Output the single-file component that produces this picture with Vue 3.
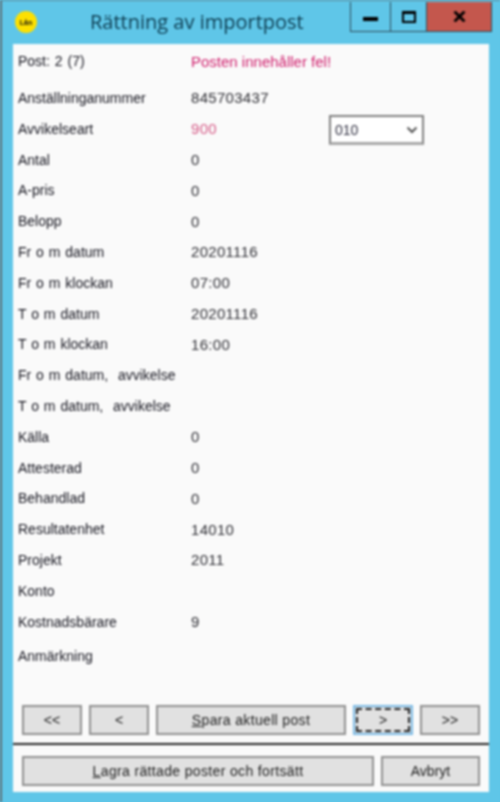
<script setup>
const rows = [
  { label: 'Anställninganummer', value: '845703437' },
  { label: 'Avvikelseart', value: '900', error: true, select: '010' },
  { label: 'Antal', value: '0' },
  { label: 'A-pris', value: '0' },
  { label: 'Belopp', value: '0' },
  { label: 'Fr o m datum', value: '20201116' },
  { label: 'Fr o m klockan', value: '07:00' },
  { label: 'T o m datum', value: '20201116' },
  { label: 'T o m klockan', value: '16:00' },
  { label: 'Fr o m datum,  avvikelse', value: '' },
  { label: 'T o m datum,  avvikelse', value: '' },
  { label: 'Källa', value: '0' },
  { label: 'Attesterad', value: '0' },
  { label: 'Behandlad', value: '0' },
  { label: 'Resultatenhet', value: '14010' },
  { label: 'Projekt', value: '2011' },
  { label: 'Konto', value: '' },
  { label: 'Kostnadsbärare', value: '9' },
  { label: 'Anmärkning', value: '', note: true },
]
</script>

<template>
  <div class="window">
    <header class="titlebar">
      <div class="logo"><span>Lån</span></div>
      <h1 class="title">Rättning av importpost</h1>
      <div class="controls">
        <div class="ctl ctl-min"><i></i></div>
        <div class="ctl ctl-max"><i></i></div>
        <div class="ctl ctl-close">
          <svg width="13" height="11" viewBox="0 0 13 11">
            <path d="M1.5 0.5 L11.5 10.5 M11.5 0.5 L1.5 10.5" stroke="#000" stroke-width="2.8" fill="none" />
          </svg>
        </div>
      </div>
    </header>

    <main class="body">
      <div class="row row-head">
        <span class="label">Post: 2 (7)</span>
        <span class="value err">Posten innehåller fel!</span>
      </div>
      <div v-for="r in rows" :key="r.label" class="row" :class="{ 'row-note': r.note }">
        <span class="label">{{ r.label }}</span>
        <span class="value" :class="{ err2: r.error }">{{ r.value }}</span>
        <div v-if="r.select" class="select">
          <span>{{ r.select }}</span>
          <svg width="12" height="8" viewBox="0 0 12 8">
            <path d="M1.5 1.5 L6 6 L10.5 1.5" stroke="#555" stroke-width="2" fill="none" />
          </svg>
        </div>
      </div>

      <div class="spacer"></div>

      <div class="nav">
        <button class="btn b-small">&lt;&lt;</button>
        <button class="btn b-small">&lt;</button>
        <button class="btn b-save"><span><u>S</u>para aktuell post</span></button>
        <button class="btn b-small focus"><span>&gt;</span></button>
        <button class="btn b-small">&gt;&gt;</button>
      </div>
      <div class="sep"></div>
      <div class="actions">
        <button class="btn b-store"><span><u>L</u>agra rättade poster och fortsätt</span></button>
        <button class="btn b-cancel">Avbryt</button>
      </div>
    </main>
  </div>
</template>

<style>
html, body { margin: 0; background: #5fc6e8; overflow: hidden; }
</style>

<style scoped>
.window {
  box-sizing: border-box;
  width: 500px;
  height: 802px;
  background: #5fc6e8;
  border-left: 2px solid #5d6f78;
  border-top: 1px solid #5d8898;
  display: flex;
  flex-direction: column;
  font-family: "Liberation Sans", Arial, sans-serif;
  font-size: 14px;
  color: #14141e;
  filter: blur(0.8px);
}
.titlebar {
  height: 43px;
  flex: none;
  display: flex;
  align-items: flex-start;
}
.logo {
  width: 22px;
  height: 22px;
  margin: 10px 0 0 13px;
  border-radius: 50%;
  background: #fde000;
  display: flex;
  align-items: center;
  justify-content: center;
  font-size: 7px;
  font-weight: bold;
  color: #111;
  flex: none;
}
.title {
  margin: 5px 0 0 53px;
  font-family: "Open Sans", sans-serif;
  font-weight: 400;
  font-size: 20px;
  line-height: 32px;
  color: #0d3c50;
  white-space: nowrap;
  flex: none;
}
.controls {
  margin: 1px 8px 0 auto;
  height: 29px;
  display: flex;
  border: 1px solid #2e4a58;
  border-top: 0;
  flex: none;
}
.ctl {
  display: flex;
  align-items: center;
  justify-content: center;
  border-right: 1px solid #2e4a58;
}
.ctl-min { width: 39px; }
.ctl-min i { width: 15px; height: 4px; background: #000; margin-top: 4px; }
.ctl-max { width: 35px; }
.ctl-max i { box-sizing: border-box; width: 14px; height: 12px; border: 2px solid #000; border-top-width: 3px; }
.ctl-close { width: 64px; background: #c4574d; border-right: 0; }
.body {
  flex: 1;
  margin: 0 11px 10px 11px;
  background: #fafafa;
  display: flex;
  flex-direction: column;
  min-height: 0;
}
.row {
  flex: none;
  height: 30.8px;
  display: flex;
  align-items: center;
  white-space: pre;
  padding-left: 5px;
}
.row-head { height: 38.6px; align-items: flex-start; padding-top: 9px; box-sizing: border-box; }
.row-note { margin-top: 4px; }
.label { width: 173px; flex: none; word-spacing: 1px; }
.value { color: #2e2e34; width: 138px; flex: none; font-size: 15px; letter-spacing: 0.3px; }
.err { color: #d0206e; width: auto; letter-spacing: 0; }
.err2 { color: #d65c88; }
.select {
  box-sizing: border-box;
  width: 95px;
  height: 30px;
  margin-top: 3px;
  flex: none;
  background: #fff;
  border: 2px solid #808080;
  border-bottom: 3px solid #a8a8a8;
  display: flex;
  align-items: center;
  justify-content: space-between;
  padding: 0 4px 0 4px;
  color: #2f2f40;
}
.spacer { flex: 1; }
.nav, .actions {
  display: flex;
  gap: 7px;
  padding: 0 8px 0 9px;
  flex: none;
}
.btn {
  box-sizing: border-box;
  height: 30px;
  margin: 0;
  padding: 0;
  background: #e1e1e1;
  border: 2px solid #909090;
  border-radius: 0;
  font: inherit;
  color: #1c1c1c;
}
.b-small { width: 60px; }
.b-save { width: 190px; letter-spacing: 0.35px; }
.focus { border-color: #7cbbe6; display: flex; padding: 1px; }
.focus span { flex: 1; border: 2px dashed #222; display: flex; align-items: center; justify-content: center; }
.sep { height: 2px; background: #222; margin: 8px 0 11px; flex: none; }
.b-store { width: 352px; letter-spacing: 0.35px; }
.b-cancel { width: 99px; }
.actions { padding-bottom: 6px; }
</style>
